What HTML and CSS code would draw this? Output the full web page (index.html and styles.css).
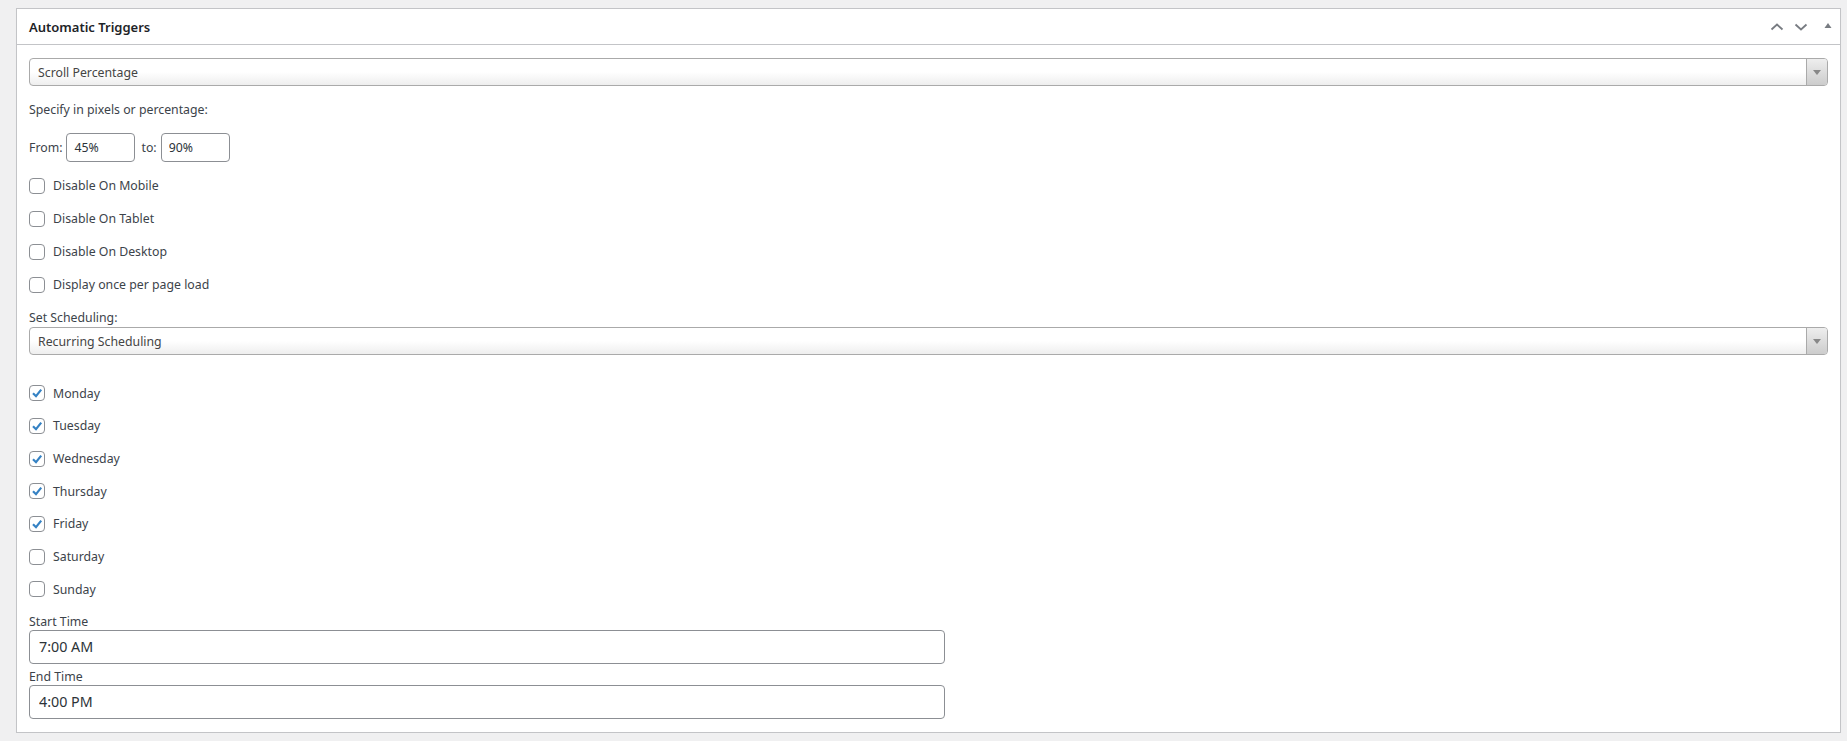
FILE: index.html
```html
<!DOCTYPE html>
<html lang="en">
<head>
  <meta charset="UTF-8" />
  <title>Automatic Triggers</title>
  <link rel="stylesheet" href="styles.css">
</head>
<body>
  <div class="postbox">
    <div class="postbox-header">
      <h2>Automatic Triggers</h2>
      <div class="handle-actions">
        <svg class="handle-icon" width="14" height="14" viewBox="0 0 14 14"><path d="M1.5 9.5 L7 4.5 L12.5 9.5" fill="none" stroke="#787c82" stroke-width="1.8"/></svg>
        <svg class="handle-icon" width="14" height="14" viewBox="0 0 14 14"><path d="M1.5 4.5 L7 9.5 L12.5 4.5" fill="none" stroke="#787c82" stroke-width="1.8"/></svg>
        <svg class="handle-toggle" width="10" height="10" viewBox="0 0 10 10"><path d="M1.5 8 L5 3 L8.5 8 Z" fill="#787c82"/></svg>
      </div>
    </div>

    <div class="inside">
      <div class="fake-select">
        <span>Scroll Percentage</span>
        <div class="select-arrow"><i></i></div>
      </div>

      <p class="hint">Specify in pixels or percentage:</p>

      <div class="range-row">
        <label>From:</label>
        <input class="small-input" type="text" value="45%">
        <label>to:</label>
        <input class="small-input" type="text" value="90%">
      </div>

      <div class="check-list">
        <div class="check-row"><span class="box"></span>Disable On Mobile</div>
        <div class="check-row"><span class="box"></span>Disable On Tablet</div>
        <div class="check-row"><span class="box"></span>Disable On Desktop</div>
        <div class="check-row"><span class="box"></span>Display once per page load</div>
      </div>

      <p class="field-label">Set Scheduling:</p>
      <div class="fake-select">
        <span>Recurring Scheduling</span>
        <div class="select-arrow"><i></i></div>
      </div>

      <div class="check-list days">
        <div class="check-row"><span class="box checked"><svg width="14" height="14" viewBox="0 0 14 14"><path d="M3 7.2 L6 10.2 L11.2 3.6" fill="none" stroke="#3582c4" stroke-width="2.2"/></svg></span>Monday</div>
        <div class="check-row"><span class="box checked"><svg width="14" height="14" viewBox="0 0 14 14"><path d="M3 7.2 L6 10.2 L11.2 3.6" fill="none" stroke="#3582c4" stroke-width="2.2"/></svg></span>Tuesday</div>
        <div class="check-row"><span class="box checked"><svg width="14" height="14" viewBox="0 0 14 14"><path d="M3 7.2 L6 10.2 L11.2 3.6" fill="none" stroke="#3582c4" stroke-width="2.2"/></svg></span>Wednesday</div>
        <div class="check-row"><span class="box checked"><svg width="14" height="14" viewBox="0 0 14 14"><path d="M3 7.2 L6 10.2 L11.2 3.6" fill="none" stroke="#3582c4" stroke-width="2.2"/></svg></span>Thursday</div>
        <div class="check-row"><span class="box checked"><svg width="14" height="14" viewBox="0 0 14 14"><path d="M3 7.2 L6 10.2 L11.2 3.6" fill="none" stroke="#3582c4" stroke-width="2.2"/></svg></span>Friday</div>
        <div class="check-row"><span class="box"></span>Saturday</div>
        <div class="check-row"><span class="box"></span>Sunday</div>
      </div>

      <p class="time-label">Start Time</p>
      <input class="time-input" type="text" value="7:00 AM">
      <p class="time-label">End Time</p>
      <input class="time-input" type="text" value="4:00 PM">
    </div>
  </div>
</body>
</html>
```

FILE: styles.css
```css
body {
  margin: 0;
  padding: 8px 6px 0 16px;
  background: #f0f0f1;
  font-family: 'Noto Sans', 'Open Sans', sans-serif;
  font-size: 12.3px;
  color: #3c434a;
}

.postbox {
  background: #fff;
  border: 1px solid #c3c4c7;
  box-shadow: 0 1px 1px rgba(0,0,0,0.04);
}

.postbox-header {
  display: flex;
  align-items: center;
  justify-content: space-between;
  height: 35px;
  border-bottom: 1px solid #c3c4c7;
  padding: 0 12px;
}

.postbox-header h2 {
  margin: 0;
  font-size: 13px;
  font-weight: 600;
  color: #1d2327;
}

.handle-actions {
  display: flex;
  align-items: center;
  gap: 10px;
  margin-right: -5px;
}

.handle-toggle {
  margin-left: 5px;
  margin-top: -3px;
}

.inside {
  padding: 13px 12px 13px 12px;
}

.fake-select {
  display: flex;
  align-items: center;
  justify-content: space-between;
  height: 28px;
  box-sizing: border-box;
  border: 1px solid #aaa;
  border-radius: 4px;
  background: linear-gradient(to bottom, #fff 0%, #fff 50%, #eee 100%);
  color: #444;
  overflow: hidden;
}

.fake-select span {
  padding-left: 8px;
  padding-top: 1px;
}

.select-arrow {
  width: 20px;
  height: 100%;
  border-left: 1px solid #aaa;
  background: linear-gradient(to bottom, #eee 0%, #ccc 100%);
  display: flex;
  align-items: center;
  justify-content: center;
}

.select-arrow i {
  width: 0;
  height: 0;
  border-left: 4px solid transparent;
  border-right: 4px solid transparent;
  border-top: 5px solid #888;
}

.hint {
  margin: 15px 0 0;
  line-height: 18px;
}

.range-row {
  display: flex;
  align-items: center;
  gap: 4px;
  margin-top: 14px;
  height: 29px;
}

.small-input {
  width: 69px;
  height: 29px;
  box-sizing: border-box;
  border: 1px solid #8c8f94;
  border-radius: 4px;
  padding: 0 7px;
  font: inherit;
  color: #2c3338;
  margin-right: 2px;
}

.check-list {
  margin-top: 7px;
}

.check-row {
  display: flex;
  align-items: center;
  height: 33px;
}

.days {
  margin-top: 22px;
}

.days .check-row {
  height: 32.67px;
}

.box {
  width: 16px;
  height: 16px;
  box-sizing: border-box;
  border: 1px solid #8c8f94;
  border-radius: 4px;
  margin-right: 8px;
  display: flex;
  align-items: center;
  justify-content: center;
  background: #fff;
}

.field-label {
  margin: 8px 0 0;
  line-height: 18px;
}

.time-label {
  margin: 8px 0 0;
  line-height: 16px;
}

.time-input {
  display: block;
  width: 916px;
  height: 34px;
  box-sizing: border-box;
  border: 1px solid #8c8f94;
  border-radius: 4px;
  padding: 0 9px;
  font-family: inherit;
  font-size: 14.3px;
  color: #2c3338;
}

.time-input + .time-label {
  margin-top: 5px;
}
```
